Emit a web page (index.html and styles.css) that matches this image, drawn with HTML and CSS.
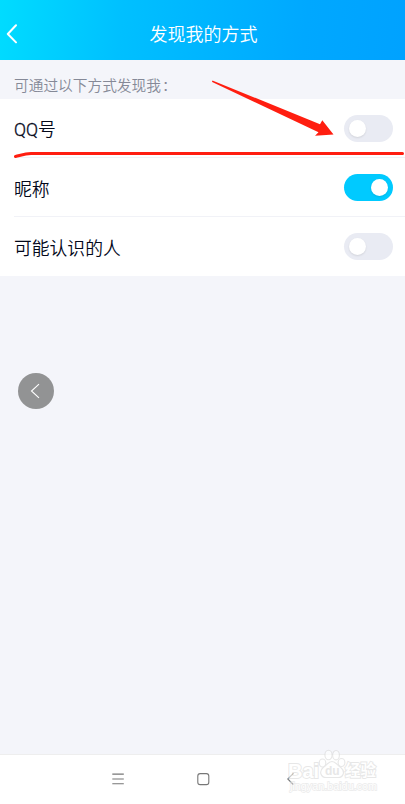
FILE: index.html
```html
<!DOCTYPE html>
<html lang="zh-CN">
<head>
  <meta charset="UTF-8" />
  <title>发现我的方式</title>
  <meta name="viewport" content="width=device-width, initial-scale=1.0" />
  <link rel="stylesheet" href="styles.css">
</head>
<body>
  <div class="screen">
    <header class="header">
      <svg class="back" width="12" height="20" viewBox="0 0 12 20"><path d="M10 1.3 1.8 10 10 18.4" /></svg>
      <h1>发现我的方式</h1>
    </header>

    <main>
      <p class="hint">可通过以下方式发现我<span class="colon">：</span></p>
      <div class="list">
        <div class="row"><span class="label"><span class="latin">QQ</span>号</span><span class="switch"></span></div>
        <div class="row"><span class="label">昵称</span><span class="switch on"></span></div>
        <div class="row"><span class="label">可能认识的人</span><span class="switch"></span></div>
      </div>
    </main>

    <nav class="navbar">
      <svg width="14" height="14" viewBox="0 0 14 14"><path d="M1.3 2.1h11.5M1.3 7h11.5M1.3 11.8h11.5" /></svg>
      <svg width="14" height="14" viewBox="0 0 14 14"><rect x="1.8" y="1.6" width="11" height="11" rx="2.4" /></svg>
      <svg width="14" height="14" viewBox="0 0 14 14"><path d="M12.3 1.3 6.8 7 12.3 12.7" /></svg>
    </nav>

    <!-- floating back button -->
    <div class="float-back">
      <svg width="36" height="36" viewBox="0 0 36 36"><path d="M21 11.2 13.5 18 21 24.8" /></svg>
    </div>

    <!-- red arrow and underline -->
    <svg class="marks" width="405" height="804" viewBox="0 0 405 804">
      <path class="arrow" d="M212 80.8 213 80.7 320 124.2 322.3 120.3 333.5 134.5 315 135.7 318.5 132.2 212.2 82z" />
      <path class="line" d="M15.5 156.5C21 155.2 25 153.6 31 153.5H402.5" />
    </svg>

    <div class="watermark">
      <span class="bai">Bai</span>
      <svg class="paw" width="28" height="30" viewBox="0 0 28 30">
        <ellipse cx="4.5" cy="14" rx="3.3" ry="4" />
        <ellipse cx="10.5" cy="6" rx="3.6" ry="4.7" />
        <ellipse cx="18" cy="6.2" rx="3.4" ry="4.7" />
        <ellipse cx="23.5" cy="13.5" rx="3.4" ry="4" />
        <path d="M14 12.5C10 12.5 9.5 16 5.2 18.5 .5 22.5 3 28.5 8 28.5H20C25.5 28.5 27.5 22.5 22.8 18.5 18.5 16 18 12.5 14 12.5z" />
      </svg>
      <span class="du">du</span>
      <span class="jy">经验</span>
      <span class="url">jingyan.baidu.com</span>
    </div>
  </div>
</body>
</html>
```
FILE: styles.css
```css
:root {
  --bg: #f4f5fa;
  --white: #ffffff;
  --text: #03081a;
  --muted: #858997;
  --on: #00caff;
  --off: #e9ebf3;
  --red: #ff1e10;
}

* {
  box-sizing: border-box;
}

body {
  margin: 0;
  background: var(--bg);
  color: var(--text);
  font-family: Roboto, "Noto Sans CJK SC", sans-serif;
}

.screen {
  position: relative;
  display: flex;
  flex-direction: column;
  height: 804px;
  overflow: hidden;
}

.header {
  display: grid;
  grid-template-columns: 30px 1fr 28px;
  align-items: center;
  height: 60px;
  padding-top: 8px;
  background: linear-gradient(96deg, #00dcff 0%, #00c0ff 30%, #00a8ff 75%, #00a2ff 100%);
}

.back {
  margin-left: 6px;
  fill: none;
  stroke: var(--white);
  stroke-width: 2;
  stroke-linecap: round;
  stroke-linejoin: round;
}

h1 {
  margin: 0;
  padding-top: 2px;
  color: var(--white);
  font-size: 18px;
  font-weight: 350;
  line-height: 26px;
  text-align: center;
}

main {
  flex: 1;
}

.hint {
  margin: 0;
  padding: 14px 14px 0;
  height: 39px;
  color: var(--muted);
  font-size: 14.7px;
  font-weight: 350;
  line-height: 25px;
}

.colon {
  margin-left: 1px;
}

.list {
  background: var(--white);
}

.row {
  display: flex;
  align-items: center;
  justify-content: space-between;
  height: 59px;
  margin-left: 14px;
  padding-right: 12px;
  border-bottom: 1px solid #f1f2f7;
}

.row:last-child {
  border-bottom: none;
}

.label {
  padding-top: 5px;
  font-size: 17.8px;
  font-weight: 350;
  line-height: 26px;
}

.row:first-child .label {
  padding-top: 3px;
}

.latin {
  font-weight: 300;
  -webkit-text-stroke: 0.3px var(--text);
}

.switch {
  display: flex;
  align-items: center;
  width: 49px;
  height: 27px;
  padding: 0 5px;
  border-radius: 14px;
  background: var(--off);
}

.switch::before {
  content: "";
  width: 17px;
  height: 17px;
  border-radius: 50%;
  background: var(--white);
  box-shadow: 0 1px 2px rgba(0, 0, 0, 0.1);
}

.switch.on {
  justify-content: flex-end;
  background: var(--on);
}

.navbar {
  display: flex;
  justify-content: space-between;
  align-items: center;
  height: 50px;
  padding: 0 110px 2px 111px;
  border-top: 1px solid #eeeeee;
  background: var(--white);
}

.navbar svg {
  fill: none;
  stroke: #777777;
  stroke-width: 1.1;
}

.float-back {
  position: absolute;
  left: 18px;
  top: 373px;
  width: 36px;
  height: 36px;
  border-radius: 50%;
  background: #929394;
}

.float-back path {
  fill: none;
  stroke: var(--white);
  stroke-width: 1.1;
}

.marks {
  position: absolute;
  left: 0;
  top: 0;
}

.arrow {
  fill: var(--red);
}

.line {
  fill: none;
  stroke: var(--red);
  stroke-width: 3;
  stroke-linecap: round;
}

/* watermark lies over the navigation bar */
.watermark {
  position: absolute;
  left: 287px;
  top: 749px;
  width: 94px;
  height: 46px;
  color: var(--white);
  font-family: "Liberation Sans", "Noto Sans CJK SC", sans-serif;
  font-weight: bold;
  opacity: 0.6;
}

.watermark span {
  position: absolute;
  white-space: nowrap;
  paint-order: stroke fill;
  -webkit-text-stroke: 1.8px #d8d8d8;
}

.watermark .bai {
  left: 1px;
  top: 12px;
  font-size: 20px;
  line-height: 20px;
}

.paw {
  position: absolute;
  left: 31px;
  top: 0;
  fill: var(--white);
  stroke: #d8d8d8;
  stroke-width: 1.1;
}

.watermark .du {
  left: 38px;
  top: 15px;
  color: #d8d8d8;
  font-size: 12px;
  line-height: 14px;
  -webkit-text-stroke: 0;
}

.watermark .jy {
  left: 58px;
  top: 12px;
  font-size: 15.5px;
  line-height: 20px;
}

.watermark .url {
  left: 3px;
  top: 30px;
  font-size: 10.8px;
  font-weight: normal;
  line-height: 14px;
  -webkit-text-stroke: 1.4px #dddddd;
}
```
